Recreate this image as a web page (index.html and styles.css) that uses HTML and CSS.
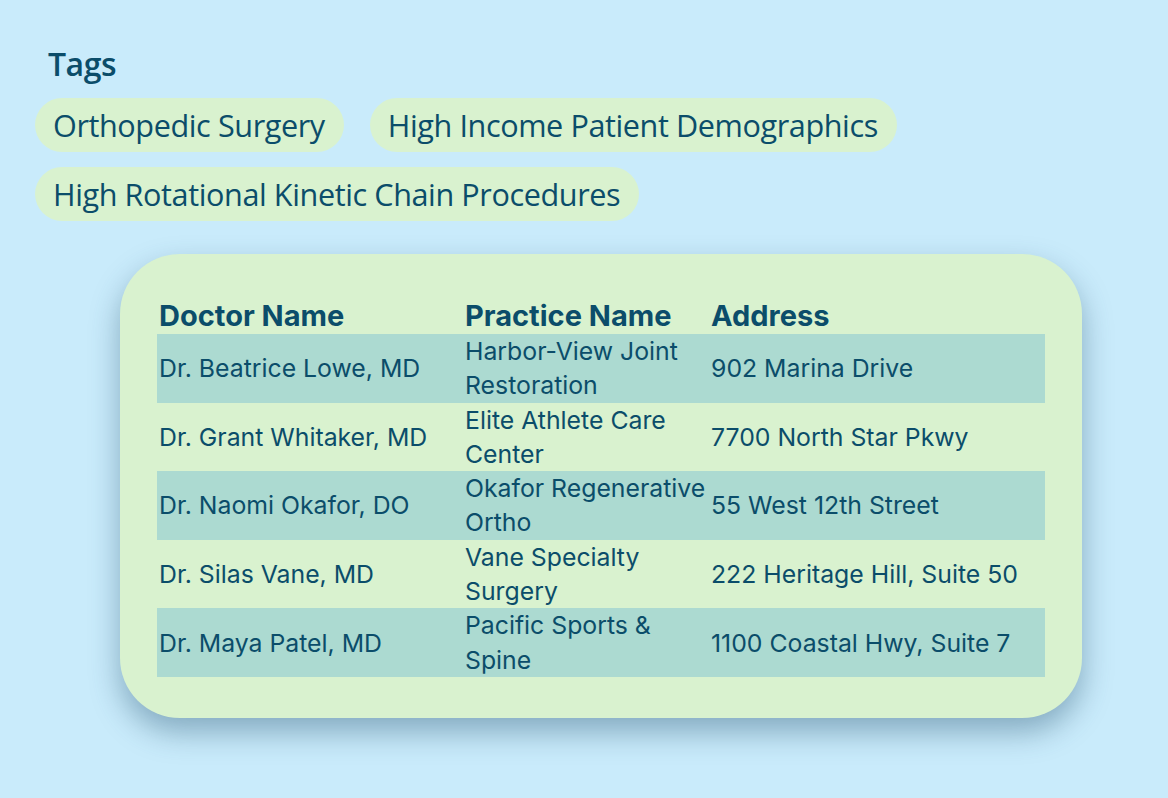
FILE: index.html
```html
<!DOCTYPE html>
<html lang="en">
<head>
<meta charset="utf-8">
<title>Tags</title>
<link rel="stylesheet" href="styles.css">
</head>
<body>
<main class="page">
  <section class="tags">
    <h2 class="tags-title">Tags</h2>
    <ul class="tag-list">
      <li class="tag">Orthopedic Surgery</li>
      <li class="tag">High Income Patient Demographics</li>
      <li class="tag">High Rotational Kinetic Chain Procedures</li>
    </ul>
  </section>
  <section class="card">
    <table class="doctors">
      <colgroup>
        <col class="c-doc">
        <col class="c-prac">
        <col class="c-addr">
      </colgroup>
      <thead>
        <tr><th>Doctor Name</th><th>Practice Name</th><th>Address</th></tr>
      </thead>
      <tbody>
        <tr><td>Dr. Beatrice Lowe, MD</td><td>Harbor-View Joint Restoration</td><td>902 Marina Drive</td></tr>
        <tr><td>Dr. Grant Whitaker, MD</td><td>Elite Athlete Care Center</td><td>7700 North Star Pkwy</td></tr>
        <tr><td>Dr. Naomi Okafor, DO</td><td>Okafor Regenerative Ortho</td><td>55 West 12th Street</td></tr>
        <tr><td>Dr. Silas Vane, MD</td><td>Vane Specialty Surgery</td><td>222 Heritage Hill, Suite 50</td></tr>
        <tr><td>Dr. Maya Patel, MD</td><td>Pacific Sports &amp; Spine</td><td>1100 Coastal Hwy, Suite 7</td></tr>
      </tbody>
    </table>
  </section>
</main>
</body>
</html>
```

FILE: styles.css
```css
html, body {
  margin: 0;
  padding: 0;
  background: #c9ebfb;
  color: #0b4d6a;
}
body {
  min-height: 100vh;
}
.page {
  padding: 44px 0 80px 35px;
  font-family: "Open Sans", "Noto Sans", sans-serif;
}
.tags-title {
  margin: 0 0 14px 13px;
  font-size: 32px;
  font-weight: 600;
  letter-spacing: -0.5px;
  line-height: 40px;
}
.tag-list {
  list-style: none;
  margin: 0;
  padding: 0;
  display: flex;
  flex-wrap: wrap;
  gap: 15px 26px;
  max-width: 900px;
}
.tag {
  background: #d9f2cf;
  border-radius: 27px;
  height: 54px;
  line-height: 54px;
  padding: 0 19px 0 18px;
  font-size: 30.6px;
  letter-spacing: -0.4px;
}
.card {
  margin: 33px 0 0 85px;
  width: 962px;
  box-sizing: border-box;
  padding: 45px 37px 41px;
  background: #d9f2cf;
  border-radius: 60px;
  box-shadow: 0 14px 30px rgba(30, 75, 105, 0.4);
}
.doctors {
  width: 888px;
  border-collapse: collapse;
  font-family: "Inter", "Noto Sans", sans-serif;
  font-size: 24.8px;
  table-layout: fixed;
}
.c-doc { width: 306px; }
.c-prac { width: 246px; }
.c-addr { width: 336px; }
.doctors th {
  text-align: left;
  font-weight: 700;
  font-size: 29px;
  padding: 0 2px 1px;
  line-height: 34px;
  vertical-align: bottom;
}
.doctors td {
  padding: 0 2px;
  line-height: 34.3px;
  height: 68.6px;
  vertical-align: middle;
}
.doctors tbody tr:nth-child(odd) {
  background: #acdad1;
}
```
